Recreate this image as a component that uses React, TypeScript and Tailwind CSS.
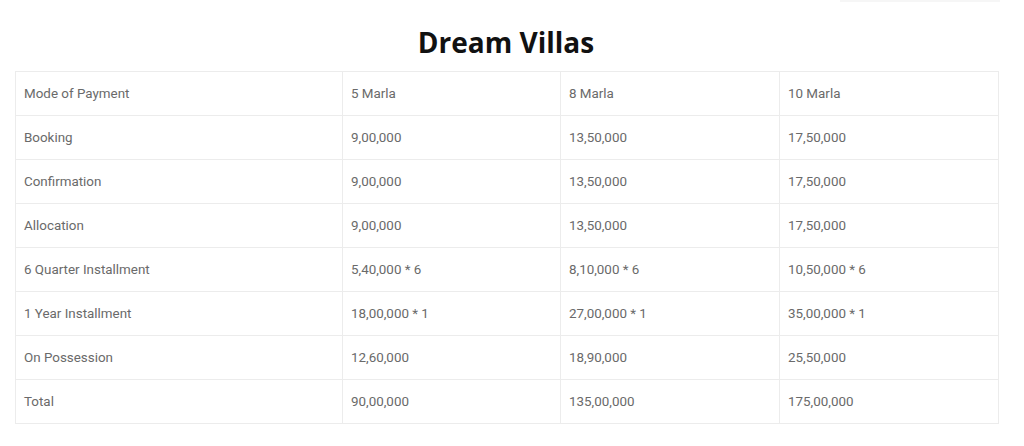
import React from 'react';

const rows: string[][] = [
    ['Mode of Payment', '5 Marla', '8 Marla', '10 Marla'],
    ['Booking', '9,00,000', '13,50,000', '17,50,000'],
    ['Confirmation', '9,00,000', '13,50,000', '17,50,000'],
    ['Allocation', '9,00,000', '13,50,000', '17,50,000'],
    ['6 Quarter Installment', '5,40,000 * 6', '8,10,000 * 6', '10,50,000 * 6'],
    ['1 Year Installment', '18,00,000 * 1', '27,00,000 * 1', '35,00,000 * 1'],
    ['On Possession', '12,60,000', '18,90,000', '25,50,000'],
    ['Total', '90,00,000', '135,00,000', '175,00,000'],
];

const widths = ['w-[327px]', 'w-[218px]', 'w-[219px]', 'w-[219px]'];

const App: React.FC = () => {
    return (
        <div className="relative w-[1024px] h-[446px] bg-white overflow-hidden">
            {/* faint strip at top right */}
            <div className="absolute top-0 right-[24px] w-[160px] h-[2px] bg-[#f6f6f6]" />

            <h2 className="pt-[25px] pr-[12px] text-center text-[28px] leading-[34px] font-bold text-[#111] font-['Open_Sans',sans-serif]">
                Dream Villas
            </h2>

            <div className="mt-[12px] ml-[15px] w-[984px]">
                <table className="border-collapse border border-[#ececec] font-['Roboto',sans-serif] text-[13.4px] text-[#6a6a6a]">
                    <tbody>
                        {rows.map((row, i) => (
                            <tr key={i} className="h-[44px]">
                                {row.map((cell, j) => (
                                    <td
                                        key={j}
                                        className={`${widths[j]} border border-[#ececec] px-[8px] pt-[2px] align-middle`}
                                    >
                                        {cell}
                                    </td>
                                ))}
                            </tr>
                        ))}
                    </tbody>
                </table>
            </div>
        </div>
    );
};

export default App;
